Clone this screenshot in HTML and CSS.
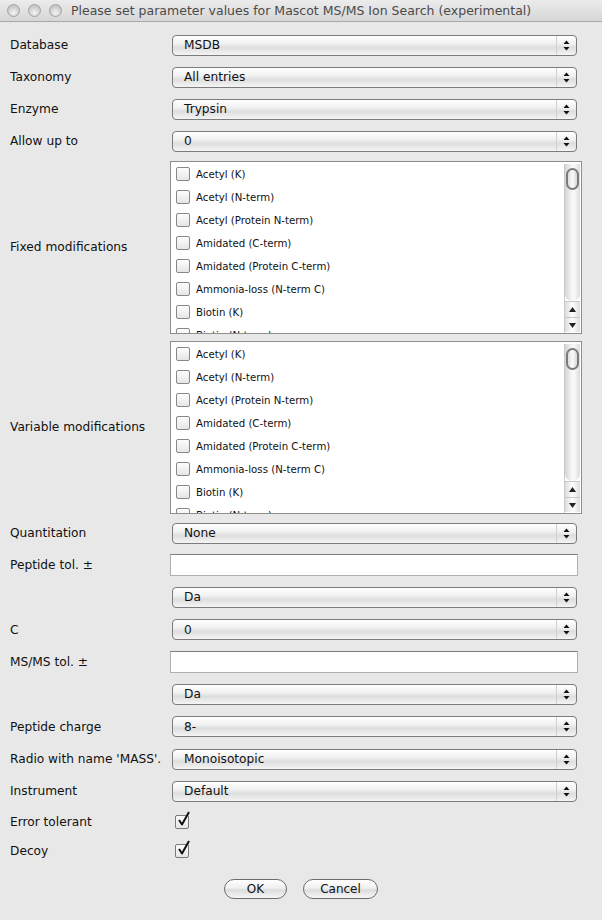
FILE: index.html
```html
<!DOCTYPE html>
<html lang="en">
<head>
  <meta charset="UTF-8" />
  <title>Mascot MS/MS Ion Search</title>
  <link rel="stylesheet" href="styles.css">
</head>
<body>

<div class="titlebar">
  <div class="lights">
    <span class="light"></span>
    <span class="light"></span>
    <span class="light"></span>
  </div>
  <div class="title">Please set parameter values for Mascot MS/MS Ion Search (experimental)</div>
</div>

<div class="form">
  <div class="row">
    <div class="lbl">Database</div>
    <div class="select"><span class="val">MSDB</span><span class="arrows"></span></div>
  </div>
  <div class="row">
    <div class="lbl">Taxonomy</div>
    <div class="select"><span class="val">All entries</span><span class="arrows"></span></div>
  </div>
  <div class="row">
    <div class="lbl">Enzyme</div>
    <div class="select"><span class="val">Trypsin</span><span class="arrows"></span></div>
  </div>
  <div class="row">
    <div class="lbl">Allow up to</div>
    <div class="select"><span class="val">0</span><span class="arrows"></span></div>
  </div>

  <div class="row row-list">
    <div class="lbl">Fixed modifications</div>
    <div class="listbox">
      <div class="items mods"></div>
      <div class="vscroll">
        <div class="track"><span class="thumb"></span></div>
        <div class="sbtn up"></div>
        <div class="sbtn down"></div>
      </div>
    </div>
  </div>
  <div class="row row-list">
    <div class="lbl">Variable modifications</div>
    <div class="listbox">
      <div class="items mods"></div>
      <div class="vscroll">
        <div class="track"><span class="thumb"></span></div>
        <div class="sbtn up"></div>
        <div class="sbtn down"></div>
      </div>
    </div>
  </div>

  <div class="row">
    <div class="lbl">Quantitation</div>
    <div class="select"><span class="val">None</span><span class="arrows"></span></div>
  </div>
  <div class="row">
    <div class="lbl">Peptide tol. ±</div>
    <input class="field" type="text">
  </div>
  <div class="row">
    <div class="lbl"></div>
    <div class="select"><span class="val">Da</span><span class="arrows"></span></div>
  </div>
  <div class="row row-tall">
    <div class="lbl">C</div>
    <div class="select"><span class="val">0</span><span class="arrows"></span></div>
  </div>
  <div class="row">
    <div class="lbl">MS/MS tol. ±</div>
    <input class="field" type="text">
  </div>
  <div class="row">
    <div class="lbl"></div>
    <div class="select"><span class="val">Da</span><span class="arrows"></span></div>
  </div>
  <div class="row row-tall">
    <div class="lbl">Peptide charge</div>
    <div class="select"><span class="val">8-</span><span class="arrows"></span></div>
  </div>
  <div class="row">
    <div class="lbl">Radio with name 'MASS'.</div>
    <div class="select"><span class="val">Monoisotopic</span><span class="arrows"></span></div>
  </div>
  <div class="row">
    <div class="lbl">Instrument</div>
    <div class="select"><span class="val">Default</span><span class="arrows"></span></div>
  </div>

  <div class="row row-check">
    <div class="lbl">Error tolerant</div>
    <span class="cb"></span>
  </div>
  <div class="row row-check">
    <div class="lbl">Decoy</div>
    <span class="cb"></span>
  </div>
</div>

<div class="buttons">
  <button class="btn btn-ok">OK</button>
  <button class="btn btn-cancel">Cancel</button>
</div>

<script>
  const mods = [
    "Acetyl (K)",
    "Acetyl (N-term)",
    "Acetyl (Protein N-term)",
    "Amidated (C-term)",
    "Amidated (Protein C-term)",
    "Ammonia-loss (N-term C)",
    "Biotin (K)",
    "Biotin (N-term)"
  ];

  const arrowSvg = `<svg width="7" height="11" viewBox="0 0 7 11">
    <path d="M3.5 0.5 L6.5 4 L0.5 4 Z" fill="#111"/>
    <path d="M0.5 7 L6.5 7 L3.5 10.5 Z" fill="#111"/>
  </svg>`;

  const tickSvg = `<svg class="tickmark" width="16" height="18" viewBox="0 0 16 18">
    <path d="M3 9 L6 13.5 L13 1" fill="none" stroke="#111" stroke-width="2" stroke-linejoin="round"/>
  </svg>`;

  document.querySelectorAll(".mods").forEach(list => {
    list.innerHTML = mods.map(m =>
      `<div class="item"><span class="cb"></span><span class="item-text">${m}</span></div>`
    ).join("");
  });

  document.querySelectorAll(".arrows").forEach(a => a.innerHTML = arrowSvg);
  document.querySelectorAll(".row-check .cb").forEach(c => c.innerHTML = tickSvg);

  document.querySelectorAll(".sbtn.up").forEach(b =>
    b.innerHTML = `<svg width="7" height="5" viewBox="0 0 7 5"><path d="M3.5 0 L7 5 L0 5 Z" fill="#222"/></svg>`);
  document.querySelectorAll(".sbtn.down").forEach(b =>
    b.innerHTML = `<svg width="7" height="5" viewBox="0 0 7 5"><path d="M0 0 L7 0 L3.5 5 Z" fill="#222"/></svg>`);
</script>

</body>
</html>
```

FILE: styles.css
```css
body {
  font-family: "DejaVu Sans", Verdana, sans-serif;
  font-size: 12.2px;
  margin: 0;
  background: #e8e8e8;
  color: #111;
}

.titlebar {
  height: 22px;
  display: flex;
  align-items: center;
  background: linear-gradient(#ececec, #d6d6d6);
  border-bottom: 1px solid #a8a8a8;
  box-sizing: border-box;
}

.lights {
  display: flex;
  gap: 8px;
  padding-left: 7px;
}

.light {
  width: 13px;
  height: 13px;
  box-sizing: border-box;
  border-radius: 50%;
  border: 1px solid #a2a2a2;
  background: radial-gradient(circle at 50% 70%, #f4f4f4, #c6c6c6 70%);
}

.title {
  margin-left: 9px;
  color: #4a4a4a;
  font-size: 12.5px;
}

.form {
  padding-top: 7px;
}

.row {
  display: flex;
  align-items: center;
  height: 32px;
}

.row-tall {
  height: 33px;
}

.lbl {
  width: 170px;
  padding-left: 10px;
  box-sizing: border-box;
  white-space: nowrap;
}

.select {
  width: 405px;
  height: 21px;
  margin-left: 2px;
  box-sizing: border-box;
  border: 1px solid #7c7c7c;
  border-radius: 4px;
  background: linear-gradient(#ffffff, #f1f1f1 40%, #dedede 60%, #f4f4f4);
  display: flex;
  align-items: center;
}

.select .val {
  flex: 1;
  padding-left: 11px;
}

.select .arrows {
  width: 19px;
  height: 100%;
  border-left: 1px solid #cfcfcf;
  display: flex;
  align-items: center;
  justify-content: center;
}

.field {
  width: 408px;
  height: 22px;
  margin: 0;
  box-sizing: border-box;
  border: 1px solid #b0b0b0;
  border-top-color: #7d7d7d;
  background: white;
  padding: 0 4px;
}

.row-list {
  height: 180px;
}

.listbox {
  width: 412px;
  height: 173px;
  box-sizing: border-box;
  border: 1px solid #8e8e8e;
  background: white;
  display: flex;
  overflow: hidden;
}

.items {
  flex: 1;
  padding-top: 1px;
  overflow: hidden;
}

.item {
  height: 23px;
  display: flex;
  align-items: center;
  padding-left: 5px;
  font-size: 10.2px;
}

.item-text {
  margin-left: 6px;
}

.cb {
  display: block;
  width: 14px;
  height: 14px;
  box-sizing: border-box;
  border: 1px solid #888888;
  border-radius: 2px;
  background: linear-gradient(#fdfdfd, #e6e6e6);
  flex-shrink: 0;
  position: relative;
}

.row-check {
  height: 29px;
}

.row-check .cb {
  margin-left: 5px;
  border-color: #7a7a7a;
}

.tickmark {
  position: absolute;
  left: 0;
  top: -5px;
  overflow: visible;
}

.vscroll {
  width: 15px;
  margin: 2px 1px 0 0;
  display: flex;
  flex-direction: column;
  border-left: 1px solid #c9c9c9;
}

.track {
  height: 138px;
  background: linear-gradient(to right, #d4d4d4, #f6f6f6 45%, #fafafa 60%, #dcdcdc);
  border-radius: 0 0 7px 7px;
  position: relative;
}

.thumb {
  position: absolute;
  left: 1px;
  top: 4px;
  width: 13px;
  height: 22px;
  box-sizing: border-box;
  border: 2px solid #7a7a7a;
  border-radius: 7px;
  background: linear-gradient(to right, #dedede, #fafafa, #d9d9d9);
}

.sbtn {
  height: 15px;
  display: flex;
  align-items: center;
  justify-content: center;
  background: linear-gradient(to right, #dcdcdc, #ffffff 50%, #dddddd);
  border-top: 1px solid #c8c8c8;
}

.buttons {
  display: flex;
  justify-content: center;
  gap: 16px;
  margin-top: 14px;
}

.btn {
  height: 20px;
  border: 1px solid #6c6c6c;
  border-radius: 10px;
  background: linear-gradient(#ffffff, #f0f0f0 45%, #dcdcdc 55%, #f7f7f7);
  font-family: "DejaVu Sans", Verdana, sans-serif;
  font-size: 12px;
  color: #111;
  padding: 0;
}

.btn-ok {
  width: 63px;
}

.btn-cancel {
  width: 75px;
}
```
